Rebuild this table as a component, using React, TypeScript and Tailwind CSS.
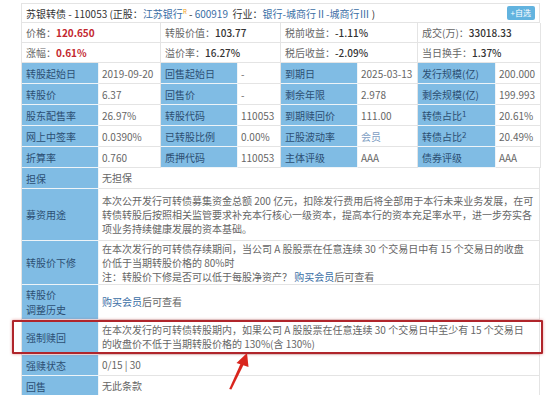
import React from "react";

const LINK = "text-[#3a6ea5]";

type Cell = { label: React.ReactNode; value: React.ReactNode };

const gridRows: Cell[][] = [
  [
    { label: "转股起始日", value: "2019-09-20" },
    { label: "回售起始日", value: "-" },
    { label: "到期日", value: "2025-03-13" },
    { label: "发行规模(亿)", value: "200.000" },
  ],
  [
    { label: "转股价", value: "6.37" },
    { label: "回售价", value: "-" },
    { label: "剩余年限", value: "2.978" },
    { label: "剩余规模(亿)", value: "199.993" },
  ],
  [
    { label: "股东配售率", value: "26.97%" },
    { label: "转股代码", value: "110053" },
    { label: "到期赎回价", value: "111.00" },
    {
      label: (
        <>
          转债占比<sup className="text-[8px] relative -top-[1px]">1</sup>
        </>
      ),
      value: "20.61%",
    },
  ],
  [
    { label: "网上中签率", value: "0.0390%" },
    { label: "已转股比例", value: "0.00%" },
    { label: "正股波动率", value: <span className="text-[#7d9dc2]">会员</span> },
    {
      label: (
        <>
          转债占比<sup className="text-[8px] relative -top-[1px]">2</sup>
        </>
      ),
      value: "20.49%",
    },
  ],
  [
    { label: "折算率", value: "0.760" },
    { label: "质押代码", value: "110053" },
    { label: "主体评级", value: "AAA" },
    { label: "债券评级", value: "AAA" },
  ],
];

function LabelCell({ children, className = "" }: { children: React.ReactNode; className?: string }) {
  return (
    <div
      className={`bg-[#80bce4] text-[#2c4f73] border-r border-b border-[#eef4f8] px-[4px] flex items-center ${className}`}
    >
      {children}
    </div>
  );
}

function ValueCell({ children, className = "" }: { children: React.ReactNode; className?: string }) {
  return (
    <div className={`bg-white text-[#666] border-r border-b border-[#e4e4e4] px-[3px] flex items-center ${className}`}>
      {children}
    </div>
  );
}

function LongRow({
  label,
  children,
  h,
}: {
  label: React.ReactNode;
  children: React.ReactNode;
  h: string;
}) {
  return (
    <div className={`flex ${h}`}>
      <LabelCell className="w-[77px] shrink-0">{label}</LabelCell>
      <ValueCell className="flex-1 leading-[14px] whitespace-nowrap">{children}</ValueCell>
    </div>
  );
}

export default function App() {
  return (
    <div className="w-[554px] h-[395px] bg-white overflow-hidden relative font-['Noto_Sans_CJK_SC',sans-serif] text-[10px]">
      <div className="ml-[21px] mt-[3px] w-[519px] border-l border-t border-[#e4e4e4]">
        {/* title */}
        <div className="h-[19px] flex items-center justify-between pl-[4px] pr-[4px] border-r border-b border-[#e4e4e4] text-[#333] whitespace-nowrap">
          <div>
            苏银转债 - 110053 (正股：<span className={LINK}>江苏银行</span>
            <sup className="text-[#f39c12] text-[6px] -top-[4px]">R</sup> -{" "}
            <span className={LINK}>600919</span>&nbsp;&nbsp;行业：
            <span className={LINK}>银行-城商行Ⅱ-城商行Ⅲ</span> )
          </div>
          <div className="bg-[#62b3df] text-white text-[8px] leading-none px-[4px] py-[3px] rounded-[2px]">+自选</div>
        </div>

        {/* price rows */}
        <div className="grid grid-cols-[139px_120px_137px_123px]">
          {[
            ["价格：", "120.650", true],
            ["转股价值：", "103.77", false],
            ["税前收益：", "-1.11%", false],
            ["成交(万)：", "33018.33", false],
            ["涨幅：", "0.61%", true],
            ["溢价率：", "16.27%", false],
            ["税后收益：", "-2.09%", false],
            ["当日换手：", "1.37%", false],
          ].map(([l, v, red]) => (
            <div
              key={l as string}
              className="h-[20px] border-r border-b border-[#e4e4e4] px-[4px] flex items-center whitespace-nowrap"
            >
              <span className="text-[#666]">{l}</span>
              <span className={red ? "text-[#c3282f] font-semibold" : "text-[#333] font-medium"}>{v}</span>
            </div>
          ))}
        </div>

        {/* grid table */}
        <div className="grid grid-cols-[77px_62px_77px_43px_77px_60px_78px_45px]">
          {gridRows.map((row, i) =>
            row.map((c, j) => (
              <React.Fragment key={`${i}-${j}`}>
                <LabelCell className="h-[21px] whitespace-nowrap">{c.label}</LabelCell>
                <ValueCell className="h-[21px] whitespace-nowrap">{c.value}</ValueCell>
              </React.Fragment>
            ))
          )}
        </div>

        <LongRow label="担保" h="h-[21px]">
          无担保
        </LongRow>
        <LongRow label="募资用途" h="h-[52px]">
          <div>
            本次公开发行可转债募集资金总额 200 亿元，扣除发行费用后将全部用于本行未来业务发展，在可
            <br />
            转债转股后按照相关监管要求补充本行核心一级资本，提高本行的资本充足率水平，进一步夯实各
            <br />
            项业务持续健康发展的资本基础。
          </div>
        </LongRow>
        <LongRow label="转股价下修" h="h-[44px]">
          <div>
            在本次发行的可转债存续期间，当公司 A 股股票在任意连续 30 个交易日中有 15 个交易日的收盘
            <br />
            价低于当期转股价格的 80%时
            <br />
            注：转股价下修是否可以低于每股净资产？ <span className={LINK}>购买会员</span>后可查看
          </div>
        </LongRow>
        <LongRow
          label={
            <div className="leading-[15px]">
              转股价
              <br />
              调整历史
            </div>
          }
          h="h-[35px]"
        >
          <div>
            <span className={LINK}>购买会员</span>后可查看
          </div>
        </LongRow>
        <div className="relative">
          <LongRow label="强制赎回" h="h-[35px]">
            <div>
              在本次发行的可转债转股期内，如果公司 A 股股票在任意连续 30 个交易日中至少有 15 个交易日
              <br />
              的收盘价不低于当期转股价格的 130%(含 130%)
            </div>
          </LongRow>
          {/* highlight box */}
          <div className="absolute -left-[10px] -right-[3px] top-0 bottom-[1px] border-2 border-[#b0252b] rounded-[1px] shadow-[0_0_3px_rgba(200,40,40,0.5)] pointer-events-none" />
        </div>
        <LongRow label="强赎状态" h="h-[21px]">
          0/15 | 30
        </LongRow>
        <LongRow label="回售" h="h-[21px]">
          无此条款
        </LongRow>
      </div>

      {/* arrow */}
      <svg className="absolute left-0 top-0 pointer-events-none" width="554" height="395" viewBox="0 0 554 395">
        <polygon points="229.2,389 231.4,389.6 244.2,363.5 241.2,362.3" fill="#d9251d" />
        <polygon points="247,353 236.5,363 248.5,367" fill="#d9251d" />
      </svg>
    </div>
  );
}
